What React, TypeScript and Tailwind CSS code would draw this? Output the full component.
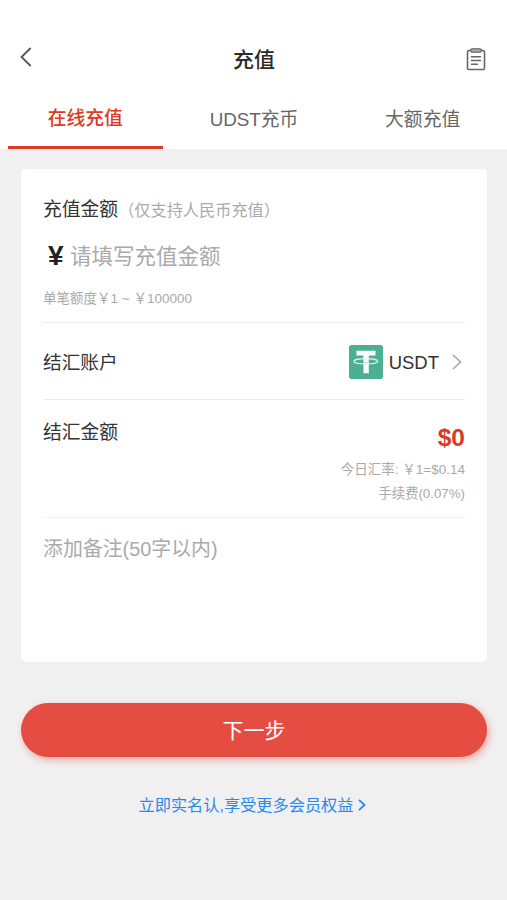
import React from 'react';

const tabs = [
  { id: 'online', name: '在线充值' },
  { id: 'usdt', name: 'UDST充币' },
  { id: 'large', name: '大额充值' },
];

const UsdtIcon: React.FC = () => (
  <svg className="w-[34px] h-[34px]" viewBox="0 0 34 34" fill="none">
    <rect width="34" height="34" rx="2.5" fill="#4caf91" />
    <path d="M7.500 5.700h19v4.800h-6.700V28.300h-5.400V10.500H7.500z" fill="#fff" />
    <ellipse cx="16.800" cy="16.300" rx="12" ry="2.700" stroke="#e3f4ee" strokeWidth="1.100" />
    <path d="M14.400 17.300h5.400" stroke="#a5d7c8" strokeWidth=".8" />
  </svg>
);

const ClipboardIcon: React.FC = () => (
  <svg className="w-5 h-6 -mt-px" viewBox="0 0 20 24" fill="none" stroke="#666" strokeWidth="1.600" strokeLinecap="round" strokeLinejoin="round">
    <path d="M5 3.500H3a1.500 1.500 0 0 0-1.500 1.500v16.200A1.300 1.300 0 0 0 2.800 22.500h14.400a1.300 1.300 0 0 0 1.300-1.300V5A1.500 1.500 0 0 0 17 3.500h-2" />
    <rect x="4.800" y="1.800" width="10.400" height="3.400" rx="1.200" fill="#b5b5b5" strokeWidth="1.200" />
    <path d="M5.500 9.800h9M5.500 13.500h9M5.500 17.200h6" strokeWidth="1.500" />
  </svg>
);

const App: React.FC = () => {
  const activeTab = 'online';

  return (
    <div className="min-h-screen bg-[#f0f0f0] font-['Liberation_Sans','Noto_Sans_CJK_SC',sans-serif] text-[#333]">
      <div className="bg-white h-[149px] pt-[34px]">
        <header className="flex items-center justify-between h-[50px] pl-5 pr-[21px]">
          <button className="w-5">
            <svg className="w-3 h-5 -mt-1" viewBox="0 0 12 20" fill="none" stroke="#555" strokeWidth="1.800">
              <path d="M10.700 1 1.500 10l9.200 9" />
            </svg>
          </button>
          <h1 className="pl-[2px] pt-px text-[21px] leading-[30px] font-medium text-[#2b2b2b]">充值</h1>
          <button>
            <ClipboardIcon />
          </button>
        </header>
        <nav className="grid grid-cols-3 h-[65px] pl-px">
          {tabs.map((tab) => (
            <button
              key={tab.id}
              className={`mx-[7px] text-[18.800px] whitespace-nowrap border-b-[3px] ${
                tab.id === activeTab
                  ? 'pt-[9px] text-[#db3a26] border-[#db3a26] font-medium'
                  : 'pt-[11px] text-[#666] border-transparent'
              }`}
            >
              {tab.name}
            </button>
          ))}
        </nav>
      </div>

      <main className="pl-[21px] pr-5 pt-5">
        <section className="bg-white rounded-[5px] h-[493px] px-[22px]">
          <div className="h-[154px] pt-[26px] border-b border-[#ebebeb]">
            <div className="flex items-center h-[30px] whitespace-nowrap">
              <span className="text-[18.800px]">充值金额</span>
              <span className="text-[16.200px] text-[#aaa]">（仅支持人民币充值）</span>
            </div>
            <div className="flex items-center h-9 mt-[13px] pl-[5px] gap-[6px] whitespace-nowrap">
              <span className="text-[28px] leading-9 font-bold text-[#222] w-4">¥</span>
              <span className="pt-[2px] text-[21.500px] leading-9 text-[#aaa]">请填写充值金额</span>
            </div>
            <p className="mt-[15px] text-[13.500px] leading-5 text-[#aaa]">单笔额度￥1 ~ ￥100000</p>
          </div>

          <div className="flex items-center justify-between h-[77px] border-b border-[#ebebeb]">
            <span className="pt-[5px] text-[18.700px]">结汇账户</span>
            <div className="flex items-center pt-px">
              <UsdtIcon />
              <span className="ml-[6px] pt-[2px] text-[18.500px] leading-6">USDT</span>
              <svg className="ml-[13px] mr-[3px] w-[10px] h-4" viewBox="0 0 10 16" fill="none" stroke="#aaa" strokeWidth="1.700">
                <path d="M1 1l7.500 7L1 15" />
              </svg>
            </div>
          </div>

          <div className="flex justify-between h-[118px] border-b border-[#f2f2f2]">
            <span className="mt-[18px] text-[18.800px] leading-[30px]">结汇金额</span>
            <div className="flex flex-col items-end pt-[22px]">
              <span className="text-[24.500px] leading-8 font-bold text-[#db3a26]">$0</span>
              <span className="mt-1 text-[13.500px] leading-6 text-[#aaa]">今日汇率: ￥1=$0.14</span>
              <span className="text-[13.300px] leading-6 text-[#aaa]">手续费(0.07%)</span>
            </div>
          </div>

          <p className="pt-[15px] text-[19.900px] leading-8 text-[#aaa]">添加备注(50字以内)</p>
        </section>

        <button className="mt-[41px] pt-px block w-full h-[54px] rounded-full bg-[#e54d42] text-white text-[21px] shadow-[2px_3px_7px_rgba(229,77,66,0.45)]">
          下一步
        </button>

        <a className="mt-[36px] pr-[3px] flex items-center justify-center gap-[5px] h-6 text-[16.200px] text-[#2788ee]">
          立即实名认,享受更多会员权益
          <svg className="w-2 h-3" viewBox="0 0 8 12" fill="none" stroke="#2788ee" strokeWidth="1.800">
            <path d="M1 .8 6.500 6 1 11.200" />
          </svg>
        </a>
      </main>
    </div>
  );
};

export default App;
